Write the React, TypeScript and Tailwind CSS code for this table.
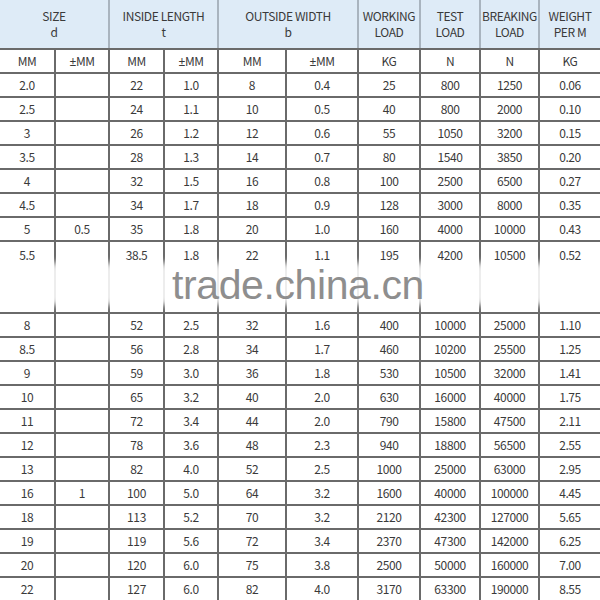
const cols = [55, 54, 55, 54, 68, 72, 62, 60, 59, 61];

const rows: string[][] = [
  ["2.0", "", "22", "1.0", "8", "0.4", "25", "800", "1250", "0.06"],
  ["2.5", "", "24", "1.1", "10", "0.5", "40", "800", "2000", "0.10"],
  ["3", "", "26", "1.2", "12", "0.6", "55", "1050", "3200", "0.15"],
  ["3.5", "", "28", "1.3", "14", "0.7", "80", "1540", "3850", "0.20"],
  ["4", "", "32", "1.5", "16", "0.8", "100", "2500", "6500", "0.27"],
  ["4.5", "", "34", "1.7", "18", "0.9", "128", "3000", "8000", "0.35"],
  ["5", "0.5", "35", "1.8", "20", "1.0", "160", "4000", "10000", "0.43"],
  ["5.5", "", "38.5", "1.8", "22", "1.1", "195", "4200", "10500", "0.52"],
  ["8", "", "52", "2.5", "32", "1.6", "400", "10000", "25000", "1.10"],
  ["8.5", "", "56", "2.8", "34", "1.7", "460", "10200", "25500", "1.25"],
  ["9", "", "59", "3.0", "36", "1.8", "530", "10500", "32000", "1.41"],
  ["10", "", "65", "3.2", "40", "2.0", "630", "16000", "40000", "1.75"],
  ["11", "", "72", "3.4", "44", "2.0", "790", "15800", "47500", "2.11"],
  ["12", "", "78", "3.6", "48", "2.3", "940", "18800", "56500", "2.55"],
  ["13", "", "82", "4.0", "52", "2.5", "1000", "25000", "63000", "2.95"],
  ["16", "1", "100", "5.0", "64", "3.2", "1600", "40000", "100000", "4.45"],
  ["18", "", "113", "5.2", "70", "3.2", "2120", "42300", "127000", "5.65"],
  ["19", "", "119", "5.6", "72", "3.4", "2370", "47300", "142000", "6.25"],
  ["20", "", "120", "6.0", "75", "3.8", "2500", "50000", "160000", "7.00"],
  ["22", "", "127", "6.0", "82", "4.0", "3170", "63300", "190000", "8.55"],
];

const heads: [string, string, number][] = [
  ["SIZE", "d", 2],
  ["INSIDE LENGTH", "t", 2],
  ["OUTSIDE WIDTH", "b", 2],
  ["WORKING", "LOAD", 1],
  ["TEST", "LOAD", 1],
  ["BREAKING", "LOAD", 1],
  ["WEIGHT", "PER M", 1],
];

const units = ["MM", "±MM", "MM", "±MM", "MM", "±MM", "KG", "N", "N", "KG"];

// x positions of the column lines that fade under the watermark
const lineXs = [55, 109, 164, 218, 286, 358, 420, 480, 539];

function Unit({ u }: { u: string }) {
  if (!u.startsWith("±")) return <>{u}</>;
  return (
    <>
      <span style={{ fontFamily: '"Noto Sans", sans-serif' }}>±</span>
      {u.slice(1)}
    </>
  );
}

export default function App() {
  return (
    <div
      className="relative w-[600px] h-[600px] overflow-hidden bg-white text-[#3a3a3a] text-[12px] tracking-[-0.4px]"
      style={{ fontFamily: '"Noto Sans CJK KR", "Noto Sans", sans-serif' }}
    >
      <table className="w-[600px] table-fixed border-collapse">
        <colgroup>
          {cols.map((w, i) => (
            <col key={i} style={{ width: w }} />
          ))}
        </colgroup>
        <thead>
          <tr className="h-[49px] bg-[#deebf7]">
            {heads.map(([a, b, span], i) => (
              <th
                key={i}
                colSpan={span}
                className={`font-normal leading-[16px] text-center border-b-2 border-b-[#6a6a6a] ${
                  i < heads.length - 1 ? "border-r-2 border-r-[#a9b4bf]" : ""
                }`}
              >
                <div>{a}</div>
                <div>{b}</div>
              </th>
            ))}
          </tr>
        </thead>
        <tbody>
          <tr className="h-[24px]">
            {units.map((u, i) => (
              <td
                key={i}
                className={`text-center border-b-2 border-[#6a6a6a] ${
                  i < units.length - 1 ? "border-r-2" : ""
                }`}
              >
                <Unit u={u} />
              </td>
            ))}
          </tr>
          {rows.map((r, ri) => {
            const tall = r[0] === "5.5";
            return (
              <tr key={ri} className={tall ? "h-[72px]" : "h-[24px]"}>
                {r.map((v, i) => (
                  <td
                    key={i}
                    className={`text-center p-0 border-b-2 border-[#6a6a6a] ${
                      i < r.length - 1 ? "border-r-2" : ""
                    } ${tall ? "align-top" : ""}`}
                  >
                    {tall ? (
                      <div className="h-[26px] flex items-center justify-center">{v}</div>
                    ) : (
                      v
                    )}
                  </td>
                ))}
              </tr>
            );
          })}
        </tbody>
      </table>

      {/* watermark */}
      {lineXs.map((x) => (
        <div
          key={x}
          className="absolute top-[262px] w-[10px] h-[44px] -ml-[5px] rounded-full bg-white blur-[3px]"
          style={{ left: x }}
        />
      ))}
      <div
        className="absolute left-[172px] top-[261px] text-[41px] leading-[48px] text-[#8e8e8e]"
        style={{ fontFamily: '"Liberation Sans", Arial, sans-serif' }}
      >
        trade.china.cn
      </div>
    </div>
  );
}
